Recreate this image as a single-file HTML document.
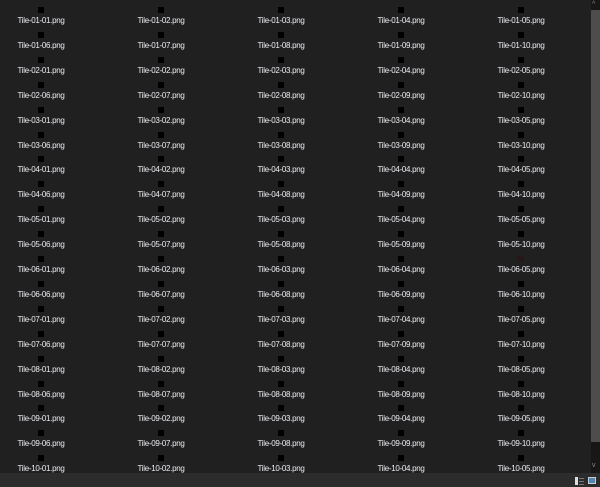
<!DOCTYPE html>
<html><head><meta charset="utf-8"><style>
*{margin:0;padding:0;box-sizing:border-box}
body{width:600px;height:487px;background:#202020;overflow:hidden;position:relative;font-family:"Liberation Sans",sans-serif}
.r{position:absolute;left:-19px;display:flex;height:25px}
.c{width:120px;position:relative;height:25px}
.c i{position:absolute;left:57px;top:0;width:6px;height:6px;background:#000}
.c b{position:absolute;left:0;width:120px;top:9px;text-align:center;font-weight:normal;font-size:8px;line-height:10px;color:#ececf2;letter-spacing:-0.3px}
#sb{position:absolute;left:591px;top:0;width:9px;height:473px;background:#171717}
#th{position:absolute;left:591px;top:10px;width:9px;height:432px;background:#4d4d4d}
#st{position:absolute;left:0;top:473px;width:600px;height:14px;background:#2c2c2c}
.ar{position:absolute;left:592px;font-size:7px;color:#888;line-height:8px}
</style></head><body>
<div class="r" style="top:7px"><div class="c"><i></i><b>Tile-01-01.png</b></div><div class="c"><i></i><b>Tile-01-02.png</b></div><div class="c"><i></i><b>Tile-01-03.png</b></div><div class="c"><i></i><b>Tile-01-04.png</b></div><div class="c"><i></i><b>Tile-01-05.png</b></div></div>
<div class="r" style="top:31.9px"><div class="c"><i></i><b>Tile-01-06.png</b></div><div class="c"><i></i><b>Tile-01-07.png</b></div><div class="c"><i></i><b>Tile-01-08.png</b></div><div class="c"><i></i><b>Tile-01-09.png</b></div><div class="c"><i></i><b>Tile-01-10.png</b></div></div>
<div class="r" style="top:56.8px"><div class="c"><i></i><b>Tile-02-01.png</b></div><div class="c"><i></i><b>Tile-02-02.png</b></div><div class="c"><i></i><b>Tile-02-03.png</b></div><div class="c"><i></i><b>Tile-02-04.png</b></div><div class="c"><i></i><b>Tile-02-05.png</b></div></div>
<div class="r" style="top:81.7px"><div class="c"><i></i><b>Tile-02-06.png</b></div><div class="c"><i></i><b>Tile-02-07.png</b></div><div class="c"><i></i><b>Tile-02-08.png</b></div><div class="c"><i></i><b>Tile-02-09.png</b></div><div class="c"><i></i><b>Tile-02-10.png</b></div></div>
<div class="r" style="top:106.6px"><div class="c"><i></i><b>Tile-03-01.png</b></div><div class="c"><i></i><b>Tile-03-02.png</b></div><div class="c"><i></i><b>Tile-03-03.png</b></div><div class="c"><i></i><b>Tile-03-04.png</b></div><div class="c"><i></i><b>Tile-03-05.png</b></div></div>
<div class="r" style="top:131.5px"><div class="c"><i></i><b>Tile-03-06.png</b></div><div class="c"><i></i><b>Tile-03-07.png</b></div><div class="c"><i></i><b>Tile-03-08.png</b></div><div class="c"><i></i><b>Tile-03-09.png</b></div><div class="c"><i></i><b>Tile-03-10.png</b></div></div>
<div class="r" style="top:156.4px"><div class="c"><i></i><b>Tile-04-01.png</b></div><div class="c"><i></i><b>Tile-04-02.png</b></div><div class="c"><i></i><b>Tile-04-03.png</b></div><div class="c"><i></i><b>Tile-04-04.png</b></div><div class="c"><i></i><b>Tile-04-05.png</b></div></div>
<div class="r" style="top:181.3px"><div class="c"><i></i><b>Tile-04-06.png</b></div><div class="c"><i></i><b>Tile-04-07.png</b></div><div class="c"><i></i><b>Tile-04-08.png</b></div><div class="c"><i></i><b>Tile-04-09.png</b></div><div class="c"><i></i><b>Tile-04-10.png</b></div></div>
<div class="r" style="top:206.2px"><div class="c"><i></i><b>Tile-05-01.png</b></div><div class="c"><i></i><b>Tile-05-02.png</b></div><div class="c"><i></i><b>Tile-05-03.png</b></div><div class="c"><i></i><b>Tile-05-04.png</b></div><div class="c"><i></i><b>Tile-05-05.png</b></div></div>
<div class="r" style="top:231.1px"><div class="c"><i></i><b>Tile-05-06.png</b></div><div class="c"><i></i><b>Tile-05-07.png</b></div><div class="c"><i></i><b>Tile-05-08.png</b></div><div class="c"><i></i><b>Tile-05-09.png</b></div><div class="c"><i></i><b>Tile-05-10.png</b></div></div>
<div class="r" style="top:256px"><div class="c"><i></i><b>Tile-06-01.png</b></div><div class="c"><i></i><b>Tile-06-02.png</b></div><div class="c"><i></i><b>Tile-06-03.png</b></div><div class="c"><i></i><b>Tile-06-04.png</b></div><div class="c"><i style="background:#261818"></i><b>Tile-06-05.png</b></div></div>
<div class="r" style="top:280.9px"><div class="c"><i></i><b>Tile-06-06.png</b></div><div class="c"><i></i><b>Tile-06-07.png</b></div><div class="c"><i></i><b>Tile-06-08.png</b></div><div class="c"><i></i><b>Tile-06-09.png</b></div><div class="c"><i></i><b>Tile-06-10.png</b></div></div>
<div class="r" style="top:305.8px"><div class="c"><i></i><b>Tile-07-01.png</b></div><div class="c"><i></i><b>Tile-07-02.png</b></div><div class="c"><i></i><b>Tile-07-03.png</b></div><div class="c"><i></i><b>Tile-07-04.png</b></div><div class="c"><i></i><b>Tile-07-05.png</b></div></div>
<div class="r" style="top:330.7px"><div class="c"><i></i><b>Tile-07-06.png</b></div><div class="c"><i></i><b>Tile-07-07.png</b></div><div class="c"><i></i><b>Tile-07-08.png</b></div><div class="c"><i></i><b>Tile-07-09.png</b></div><div class="c"><i></i><b>Tile-07-10.png</b></div></div>
<div class="r" style="top:355.6px"><div class="c"><i></i><b>Tile-08-01.png</b></div><div class="c"><i></i><b>Tile-08-02.png</b></div><div class="c"><i></i><b>Tile-08-03.png</b></div><div class="c"><i></i><b>Tile-08-04.png</b></div><div class="c"><i></i><b>Tile-08-05.png</b></div></div>
<div class="r" style="top:380.5px"><div class="c"><i></i><b>Tile-08-06.png</b></div><div class="c"><i></i><b>Tile-08-07.png</b></div><div class="c"><i></i><b>Tile-08-08.png</b></div><div class="c"><i></i><b>Tile-08-09.png</b></div><div class="c"><i></i><b>Tile-08-10.png</b></div></div>
<div class="r" style="top:405.4px"><div class="c"><i></i><b>Tile-09-01.png</b></div><div class="c"><i></i><b>Tile-09-02.png</b></div><div class="c"><i></i><b>Tile-09-03.png</b></div><div class="c"><i></i><b>Tile-09-04.png</b></div><div class="c"><i></i><b>Tile-09-05.png</b></div></div>
<div class="r" style="top:430.3px"><div class="c"><i></i><b>Tile-09-06.png</b></div><div class="c"><i></i><b>Tile-09-07.png</b></div><div class="c"><i></i><b>Tile-09-08.png</b></div><div class="c"><i></i><b>Tile-09-09.png</b></div><div class="c"><i></i><b>Tile-09-10.png</b></div></div>
<div class="r" style="top:455.2px"><div class="c"><i></i><b>Tile-10-01.png</b></div><div class="c"><i></i><b>Tile-10-02.png</b></div><div class="c"><i></i><b>Tile-10-03.png</b></div><div class="c"><i></i><b>Tile-10-04.png</b></div><div class="c"><i></i><b>Tile-10-05.png</b></div></div>
<div id="sb"></div><div id="th"></div>
<div class="ar" style="top:1px">&#94;</div>
<div class="ar" style="top:462px">v</div>
<div id="st">
<div style="position:absolute;left:575px;top:4px;width:3px;height:8px;background:#ddd"></div>
<div style="position:absolute;left:579px;top:5px;width:5px;height:1px;background:#777"></div>
<div style="position:absolute;left:579px;top:8px;width:5px;height:1px;background:#777"></div>
<div style="position:absolute;left:579px;top:11px;width:5px;height:1px;background:#777"></div>
<div style="position:absolute;left:588px;top:4px;width:8px;height:7px;background:#4a86b8;border:1px solid #ccc"></div>
</div>
</body></html>
